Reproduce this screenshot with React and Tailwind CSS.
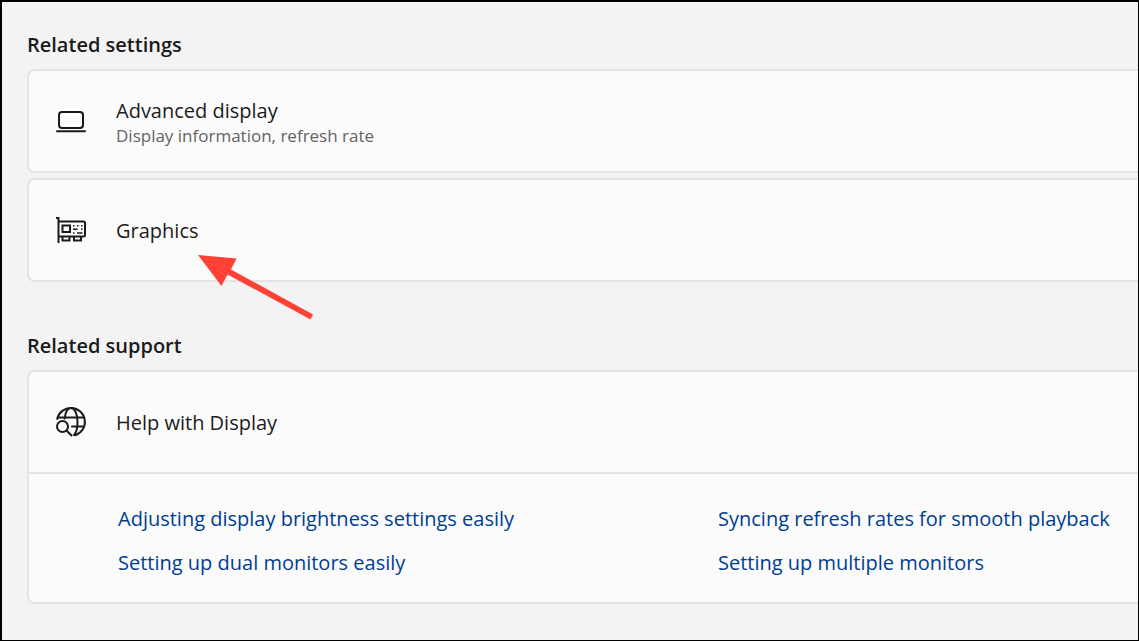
import React from 'react';

const LaptopIcon = () => (
  <svg className="w-8 h-8" viewBox="0 0 32 32" fill="none" stroke="#1b1b1b" strokeWidth="2" aria-hidden="true">
    <rect x="4" y="7" width="24" height="16" rx="3" />
    <path d="M2 26.2h28" strokeLinecap="round" />
  </svg>
);

const GraphicsCardIcon = () => (
  <svg className="w-8 h-8" viewBox="0 0 32 32" fill="none" stroke="#1b1b1b" strokeWidth="2" aria-hidden="true">
    <path d="M1 4h2.500v25" />
    <path d="M4 7.500h24.500a1.500 1.500 0 0 1 1.500 1.500v12a1.500 1.500 0 0 1-1.500 1.500H4" />
    <path d="M7.500 22.500v4h7v-4M19 22.500v4h7v-4" />
    <rect x="7.500" y="11.500" width="7.500" height="6.500" />
    <path d="M18 11.800h1.500M22 11.800h1.500M26 11.800h1.500M18 15.200h4.500M26 15.200h1.500M18 19h1.500M22 19h5.500" strokeWidth="1.600" />
  </svg>
);

const GlobeSearchIcon = () => (
  <svg className="w-8 h-8" viewBox="0 0 32 32" fill="none" stroke="#1b1b1b" strokeWidth="2" strokeLinecap="round" aria-hidden="true">
    <path d="M2.200 13A14 14 0 1 1 20 29.300" />
    <path d="M2.800 11.500h26.400M17 20.500h12.200" />
    <path d="M9.500 12.500C10.500 6 13 2 16 2c3.700 0 6.500 6 6.500 14 0 5.500-1 10.500-3.500 13" />
    <circle cx="7.500" cy="20.500" r="5.500" />
    <path d="M11.500 24.500l5 5" />
  </svg>
);

const SettingRow = ({ icon, title, description }) => (
  <button type="button" className="flex w-full h-[100px] items-center pl-[26px] gap-[29px] text-left">
    {icon}
    <span className="flex flex-col pt-[2px]">
      <span className="text-[20px] leading-[28px] text-[#1b1b1b]">{title}</span>
      {description && <span className="text-[17px] leading-[22px] text-[#636363]">{description}</span>}
    </span>
  </button>
);

const Card = ({ children }) => (
  <div className="rounded-l-lg border-2 border-r-0 border-[#e4e4e4] bg-[#fbfbfb]">{children}</div>
);

const helpLinks = [
  'Adjusting display brightness settings easily',
  'Syncing refresh rates for smooth playback',
  'Setting up dual monitors easily',
  'Setting up multiple monitors',
];

const App = () => {
  return (
    <main className="min-h-screen border-t-2 border-l-2 border-r border-b border-black bg-[#f3f3f3] pl-[25px] pt-[29px] font-['Open_Sans',sans-serif]">
      <section>
        <h2 className="mb-[10px] text-[20px] leading-[28px] font-semibold text-[#1b1b1b]">Related settings</h2>
        <div className="flex flex-col gap-[5px]">
          <Card>
            <SettingRow icon={<LaptopIcon />} title="Advanced display" description="Display information, refresh rate" />
          </Card>
          <div className="relative">
            <Card>
              <SettingRow icon={<GraphicsCardIcon />} title="Graphics" />
            </Card>
            {/* Arrow pointing at the Graphics row */}
            <svg className="absolute left-[170px] top-[76px] w-[116px] h-[66px]" viewBox="0 0 116 66" fill="#ff4136" aria-hidden="true">
              <path d="M1 1L39.500 4.500L34 15.500L116 60.500L113.500 65.500L30.500 20.500L24.500 32Z" />
            </svg>
          </div>
        </div>
      </section>

      <section className="mt-[50px]">
        <h2 className="mb-[10px] text-[20px] leading-[28px] font-semibold text-[#1b1b1b]">Related support</h2>
        <Card>
          <SettingRow icon={<GlobeSearchIcon />} title="Help with Display" />
          <ul className="grid grid-cols-[600px_1fr] gap-y-4 border-t-2 border-[#e4e4e4] pl-[89px] pt-[31px] pb-[25px]">
            {helpLinks.map((label) => (
              <li key={label} className="text-[20px] leading-[28px] text-[#003e92]">
                <a href="#">{label}</a>
              </li>
            ))}
          </ul>
        </Card>
      </section>
    </main>
  );
};

export default App;
